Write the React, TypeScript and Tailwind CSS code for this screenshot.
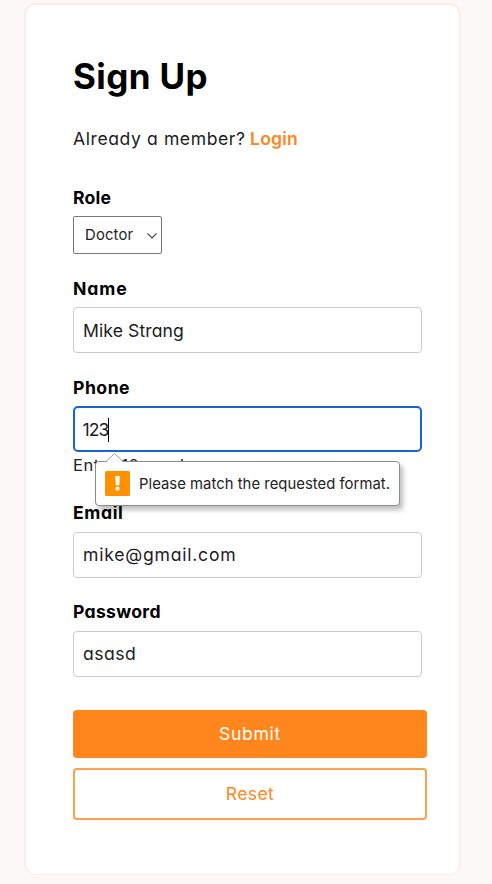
import React from "react";

const inputBase =
  "flex h-[46px] w-[349px] items-center rounded-[4px] border border-[#cbcbcb] bg-white px-[9px] text-[17.6px] leading-none text-[#1c1c1c]";

function Text({ children, className = "" }: { children: React.ReactNode; className?: string }) {
  return <span className={"whitespace-pre " + className}>{children}</span>;
}

function Label({ children, className = "" }: { children: React.ReactNode; className?: string }) {
  return <div className={"h-5 text-[17.6px] leading-5 font-bold text-black whitespace-pre " + className}>{children}</div>;
}

function Tooltip() {
  return (
    <div className="absolute top-[55px] left-[22px] flex h-[45px] w-[305px] items-center rounded-[4px] border border-[#8c8c8c] bg-white pl-[9px] shadow-[3px_4px_5px_rgba(0,0,0,0.26)]">
      <svg className="absolute -top-[9px] left-[9px]" width="20" height="10" viewBox="0 0 20 10" fill="none">
        <path d="M1 9 L9.5 1 L18 9 V10 H1Z" fill="white" />
        <path d="M1 8.5 L9.5 0.5 L18 8.5" stroke="#999" />
      </svg>
      <svg width="25" height="25" viewBox="0 0 25 25">
        <rect width="25" height="25" rx="1.5" fill="#ff9000" />
        <path d="M10.3 5h4.4l-.4 9.2h-3.6z" fill="white" />
        <circle cx="12.5" cy="17.7" r="2.1" fill="white" />
      </svg>
      <Text className="ml-[9px] pt-px text-[14.8px] leading-none tracking-[0.05px] text-[#222] [font-feature-settings:normal]">Please match the requested format.</Text>
    </div>
  );
}

export default function App() {
  return (
    <div className="h-[884px] w-[492px] overflow-hidden bg-[#fcf8f7] pt-[3px] pl-[24px] font-['Inter','Open_Sans',sans-serif] [font-feature-settings:'cv11']">
      <main className="h-[872px] w-[437px] rounded-[12px] border-2 border-b border-[#fbece9] bg-white pt-[51px] pl-[47px]">
        <h1 className="h-[40px] text-[35px] leading-[40px] font-bold tracking-[0.4px] text-black"><Text>Sign Up</Text></h1>
        <p className="mt-[33px] flex h-5 gap-[4.4px] text-[17.6px] leading-5 text-[#1c1c1c]">
          <Text className="tracking-[0.57px]">Already a member?</Text>
          <a className="font-semibold tracking-[0.2px] text-[#ff861c]"><Text>Login</Text></a>
        </p>
        <Label className="mt-[39px] tracking-[0.2px]">Role</Label>
        <div className="mt-[8px] flex h-[38px] w-[89px] items-center justify-between rounded-[2px] border border-[#777] pt-px pr-[4px] pl-[11px] text-[14.8px] tracking-[0.2px] text-[#222]">
          <Text>Doctor</Text>
          <svg width="10" height="6" viewBox="0 0 10 6" fill="none" stroke="#444" strokeWidth="1.1"><path d="M.5.5 5 5 9.5.5" /></svg>
        </div>
        <Label className="mt-[25px] tracking-[0.9px]">Name</Label>
        <div className={inputBase + " mt-[8px] pt-px"}><Text className="tracking-[0.08px]">Mike Strang</Text></div>
        <Label className="mt-[25px] tracking-[0.5px]">Phone</Label>
        <div className="relative mt-[8px]">
          <div className="flex h-[46px] w-[349px] items-center rounded-[5px] border-2 border-[#1466d2] pt-px pl-[7.5px] text-[17.6px] leading-none text-[#1c1c1c]">
            <Text className="tracking-[-1px]">123</Text>
            <span className="h-6 w-px bg-black" />
          </div>
          <p className="mt-[3px] h-5 text-[16.5px] leading-5 tracking-[0.5px] text-[#222]"><Text>Enter 10 numbers</Text></p>
          <Tooltip />
        </div>
        <Label className="mt-[28px] tracking-[0.6px]">Email</Label>
        <div className={inputBase + " mt-[9px]"}><Text className="tracking-[0.76px]">mike@gmail.com</Text></div>
        <Label className="mt-[24px] tracking-[0.3px]">Password</Label>
        <div className={inputBase + " mt-[9px]"}><Text className="tracking-[0.5px]">asasd</Text></div>
        <div className="mt-[33px] flex h-[48px] w-[354px] items-center justify-center rounded-[4px] bg-[#ff861c] text-[17.6px] tracking-[0.65px] text-white"><Text>Submit</Text></div>
        <div className="mt-[10px] flex h-[52px] w-[354px] items-center justify-center rounded-[4px] border-2 border-[#ffa04d] pt-px text-[17.6px] tracking-[0.35px] text-[#ff861c]"><Text>Reset</Text></div>
      </main>
    </div>
  );
}
